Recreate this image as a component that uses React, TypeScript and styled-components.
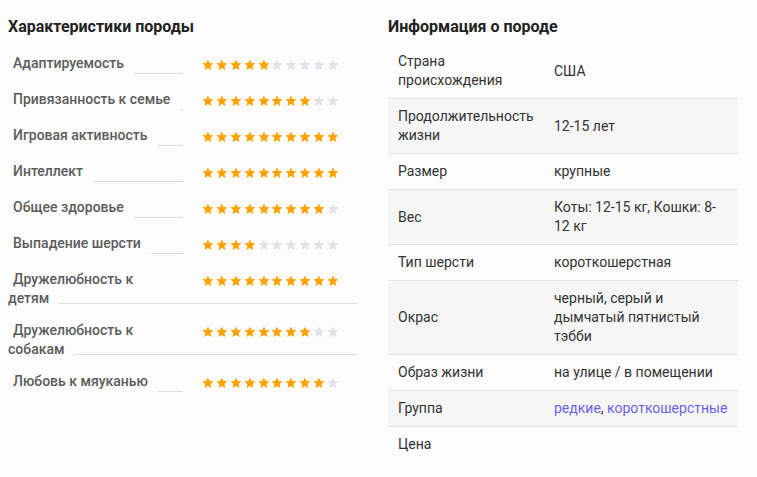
import React from 'react';
import styled, { createGlobalStyle } from 'styled-components';

const GlobalStyle = createGlobalStyle`
	body {
		margin: 0;
		background: #fcfcfc;
		font-family: Roboto, "Liberation Sans", Arial, sans-serif;
	}
`;

interface IRating {
	first: string;
	rest?: string;
	value: number;
}

const ratings: IRating[] = [
	{ first: 'Адаптируемость', value: 5 },
	{ first: 'Привязанность к семье', value: 8 },
	{ first: 'Игровая активность', value: 10 },
	{ first: 'Интеллект', value: 10 },
	{ first: 'Общее здоровье', value: 9 },
	{ first: 'Выпадение шерсти', value: 4 },
	{ first: 'Дружелюбность к', rest: 'детям', value: 10 },
	{ first: 'Дружелюбность к', rest: 'собакам', value: 8 },
	{ first: 'Любовь к мяуканью', value: 9 },
];

const info: { name: string; value?: string; links?: string[] }[] = [
	{ name: 'Страна происхождения', value: 'США' },
	{ name: 'Продолжительность жизни', value: '12-15 лет' },
	{ name: 'Размер', value: 'крупные' },
	{ name: 'Вес', value: 'Коты: 12-15 кг, Кошки: 8-12 кг' },
	{ name: 'Тип шерсти', value: 'короткошерстная' },
	{ name: 'Окрас', value: 'черный, серый и дымчатый пятнистый тэбби' },
	{ name: 'Образ жизни', value: 'на улице / в помещении' },
	{ name: 'Группа', links: ['редкие', 'короткошерстные'] },
	{ name: 'Цена', value: '' },
];

function Stars({ value }: { value: number }) {
	return (
		<StarsBox>
			{Array.from({ length: 10 }).map((_, i) => (
				<Star key={i} viewBox="0 0 24 24" $on={i < value}>
					<polygon points="12,0.8 15.3,8 23.2,8.9 17.3,14.3 18.9,22.2 12,18.2 5.1,22.2 6.7,14.3 0.8,8.9 8.7,8" />
				</Star>
			))}
		</StarsBox>
	);
}

export default function App() {
	return (
		<Page>
			<GlobalStyle />
			<Column>
				<Title>Характеристики породы</Title>
				<RatingList>
					{ratings.map((r) =>
						r.rest ? (
							<WrappedRow key={r.first + r.rest}>
								<Line>
									<LabelBox>
										<LabelText $indent>{r.first}</LabelText>
									</LabelBox>
									<Stars value={r.value} />
								</Line>
								<LabelBox>
									<LabelText>{r.rest}</LabelText>
									<Leader $low />
								</LabelBox>
							</WrappedRow>
						) : (
							<Row key={r.first}>
								<LabelBox $narrow>
									<LabelText $indent>{r.first}</LabelText>
									<Leader />
								</LabelBox>
								<Stars value={r.value} />
							</Row>
						)
					)}
				</RatingList>
			</Column>
			<Column>
				<Title>Информация о породе</Title>
				<InfoTable>
					<tbody>
						{info.map((row, i) => (
							<InfoRow key={row.name} $striped={i % 2 === 1} $last={i === info.length - 1}>
								<NameCell>{row.name}</NameCell>
								<ValueCell>
									{row.links
										? row.links.map((l, j) => (
												<React.Fragment key={l}>
													{j > 0 && ', '}
													<Link href="#">{l}</Link>
												</React.Fragment>
										  ))
										: row.value}
								</ValueCell>
							</InfoRow>
						))}
					</tbody>
				</InfoTable>
			</Column>
		</Page>
	);
}

/**
 * Styled Components...
 */
const Page = styled.div`
	display: flex;
	gap: 30px;
	padding: 17px 0 0 8px;
`;
const Column = styled.div`
	width: 350px;
	display: flex;
	flex-direction: column;
`;
const Title = styled.div`
	font-size: 16px;
	line-height: 20px;
	font-weight: 700;
	color: #222;
`;
const RatingList = styled.div`
	margin-top: 17px;
	width: 349px;
`;
const Row = styled.div`
	display: flex;
	align-items: stretch;
	height: 19px;
	padding-bottom: 17px;
`;
const WrappedRow = styled.div`
	display: flex;
	flex-direction: column;
	padding-bottom: 13px;
`;
const Line = styled.div`
	display: flex;
	height: 19px;
`;
const LabelBox = styled.div<{ $narrow?: boolean }>`
	display: flex;
	align-items: stretch;
	width: ${(p) => (p.$narrow ? '175px' : 'auto')};
	min-width: 175px;
`;
const LabelText = styled.span<{ $indent?: boolean }>`
	font-size: 14px;
	line-height: 19px;
	font-weight: 500;
	color: #5c5c5c;
	white-space: nowrap;
	padding-left: ${(p) => (p.$indent ? '5px' : '0')};
`;
const Leader = styled.span<{ $low?: boolean }>`
	flex: 1;
	min-width: 3px;
	margin-left: 10px;
	border-bottom: 1px solid #dcdcdc;
	margin-bottom: ${(p) => (p.$low ? '4px' : '-1px')};
`;
const StarsBox = styled.div`
	display: flex;
	align-items: center;
	gap: 2.1px;
	margin-left: 19px;
	padding-top: 3px;
`;
const Star = styled.svg<{ $on: boolean }>`
	width: 11.8px;
	height: 11.8px;
	fill: ${(p) => (p.$on ? '#ffa200' : '#e2e3e8')};
`;
const InfoTable = styled.table`
	margin-top: 7px;
	width: 350px;
	border-collapse: collapse;
	font-size: 14px;
	line-height: 19px;
	color: #333;
`;
const InfoRow = styled.tr<{ $striped: boolean; $last: boolean }>`
	background: ${(p) => (p.$striped ? '#f6f6f7' : 'transparent')};
	border-bottom: ${(p) => (p.$last ? 'none' : '1px solid #e3e3e8')};
`;
const NameCell = styled.td`
	width: 136px;
	padding: 8px 10px;
	vertical-align: middle;
`;
const ValueCell = styled.td`
	padding: 8px 10px;
	vertical-align: middle;
`;
const Link = styled.a`
	color: #6b62e4;
	text-decoration: none;
`;
